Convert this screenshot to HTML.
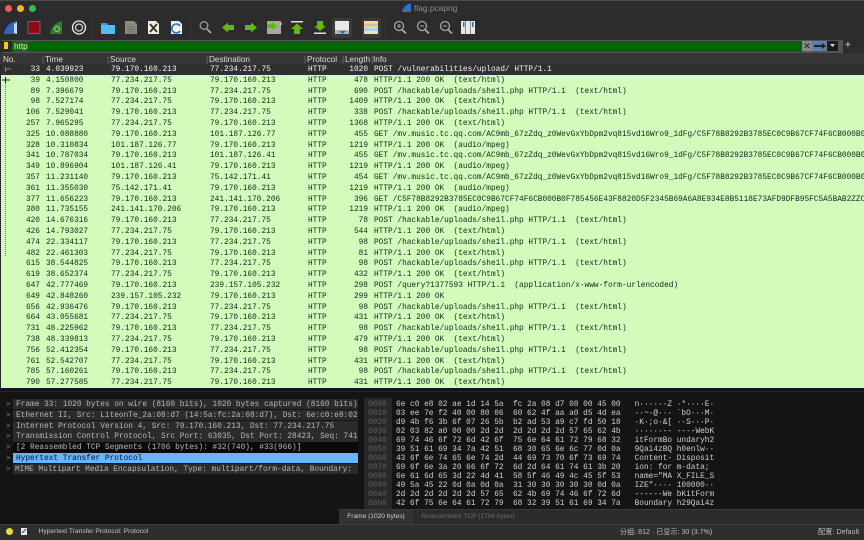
<!DOCTYPE html>
<html><head><meta charset="utf-8"><style>
html,body{margin:0;padding:0;background:#2b2b2b}
#a{position:relative;width:864px;height:540px;overflow:hidden;background:#2c2c2c;font-family:"Liberation Sans","Noto Sans CJK SC",sans-serif;filter:blur(.35px)}
#a div,#a svg{position:absolute}
.m{font-family:"Liberation Mono",monospace;font-size:7.8px;white-space:pre}
.h span{position:absolute;top:0;font-size:8.2px;color:#ddd}
#l{left:1px;top:64px;width:863px;height:324px;background:#d3fcbc;overflow:hidden;white-space:normal}
#l p{position:absolute;left:0;width:863px;height:10.8px;line-height:10.8px;margin:0;color:#12281a;overflow:hidden;white-space:pre}
#l p:first-child{background:#303030;color:#f2f2f2;top:0}
#l i{font-style:normal;position:absolute;top:1px}
#l i:nth-child(1){left:2px;width:37px;text-align:right}
#l i:nth-child(2){left:45px}
#l i:nth-child(3){left:110px}
#l i:nth-child(4){left:209px}
#l i:nth-child(5){left:307px}
#l i:nth-child(6){left:337px;width:30px;text-align:right}
#l i:nth-child(7){left:373px}
.d{left:13px;width:345px;height:10.4px;line-height:12.4px;background:#2b2b2b;color:#b8b8b8;padding-left:3px;box-sizing:border-box;overflow:hidden}
.ar{left:6px;color:#888;font-size:7.5px;line-height:12.4px}
#x{left:396px;top:400.5px;width:468px;line-height:9.04px;color:#cfcfcf}
#o{left:364px;top:398px;width:28px;line-height:9.04px;color:#5f5f5f;background:#282828;padding:2.5px 0 0 4px;box-sizing:border-box;height:111px}
</style></head><body><div id="a">
<div style="left:0;top:0;width:864px;height:1px;background:#4a4a4a"></div>
<div style="left:4.5px;top:5px;width:7px;height:7px;border-radius:50%;background:#f25c54"></div>
<div style="left:16.5px;top:5px;width:7px;height:7px;border-radius:50%;background:#f5b62e"></div>
<div style="left:28.5px;top:5px;width:7px;height:7px;border-radius:50%;background:#2fc14a"></div>
<div style="left:414px;top:3px;font-size:8.4px;line-height:11px;color:#8d8d8d">flag.pcapng</div>
<svg style="left:0;top:0" width="864" height="40" viewBox="0 0 864 40">
<path d="M402 12C403 7 406 4 411 3.500V12Z" fill="#2f6fd0"/>
<path d="M4 34C5 27 10 22 17 21V34Z" fill="#2c64c8"/><path d="M14 33V24L17 22V34Z" fill="#c9d7f0"/>
<rect x="28" y="21.500" width="12" height="12" fill="#8b0d16" stroke="#666"/>
<path d="M50 34C51 27 56 22 62 21V34Z" fill="#2e7d32"/><circle cx="57" cy="29" r="2.500" fill="none" stroke="#a9d18e"/>
<circle cx="79" cy="27.500" r="6.500" fill="none" stroke="#eee" stroke-width="1.300"/><circle cx="79" cy="27.500" r="3.500" fill="none" stroke="#ddd" stroke-width="1.200"/>
<rect x="92" y="18" width="1" height="20" fill="#3a3a3a"/>
<path d="M101 23H107L108 25H115V34H101Z" fill="#52bdf5"/><path d="M101 23H107L108 25H101Z" fill="#2e97d8"/>
<path d="M125 21H134L137 24V34H125Z" fill="#8a8a82"/><path d="M127 27H135M127 29.500H135M127 32H135" stroke="#66665f" stroke-width=".8"/>
<path d="M148 21H156L159 24V34H148Z" fill="#f3ecd8"/><path d="M150 24L157 32M157 24L150 32" stroke="#333" stroke-width="1.800"/>
<path d="M171 21H179L182 24V34H171Z" fill="#f0f0ee"/><path d="M180 26A4.500 4.500 0 1 0 180 31" fill="none" stroke="#2a6fc0" stroke-width="1.600"/>
<rect x="190" y="18" width="1" height="20" fill="#3a3a3a"/>
<circle cx="204" cy="25.500" r="3.800" fill="none" stroke="#999" stroke-width="1.400"/><path d="M207 29L211 33" stroke="#aaa" stroke-width="1.800"/>
<path d="M222 27.500L228 22.500V25H234V30H228V32.500Z" fill="#5fb90e"/>
<path d="M257 27.500L251 22.500V25H245V30H251V32.500Z" fill="#5fb90e"/>
<rect x="267" y="21" width="14" height="13" fill="#a9a9a0"/><path d="M277 26L272 22V24H267V28H272V30Z" fill="#5fb90e"/><circle cx="281" cy="24" r="1" fill="#e8d24a"/>
<rect x="291" y="21" width="12" height="1.500" fill="#ddd"/><path d="M297 23.500L303 29H300V34H294V29H291Z" fill="#5fb90e"/>
<rect x="314" y="32.500" width="12" height="1.500" fill="#ddd"/><path d="M320 31L326 26H323V21H317V26H314Z" fill="#5fb90e"/>
<rect x="332" y="18" width="20" height="20" rx="2" fill="#3a3a3a"/><rect x="335" y="21" width="14" height="13" fill="#e8e8e8"/><rect x="335" y="30" width="14" height="4" fill="#b5b5b5"/><path d="M339 31H346L342.500 34Z" fill="#1d6fc4"/>
<rect x="362" y="18" width="19" height="20" rx="2" fill="#3a3a3a"/><rect x="364" y="21" width="14" height="2.500" fill="#efe09a"/><rect x="364" y="23.500" width="14" height="2.500" fill="#f3a9b5"/><rect x="364" y="26" width="14" height="2.500" fill="#c9e6a6"/><rect x="364" y="28.500" width="14" height="2.500" fill="#b9c8f0"/><rect x="364" y="31" width="14" height="3" fill="#e6e3c0"/>
<rect x="385" y="18" width="1" height="20" fill="#3a3a3a"/>
<g fill="none" stroke="#a5a5a5" stroke-width="1.300"><circle cx="399" cy="26" r="4.500"/><circle cx="422" cy="26" r="4.500"/><circle cx="445" cy="26" r="4.500"/><path d="M402 29.500L406 33.500M425 29.500L429 33.500M448 29.500L452 33.500" stroke-width="1.800"/><path d="M397 26H401M399 24V28M420 26H424M443 26H447" stroke-width="1"/></g>
<rect x="461" y="21" width="14" height="13" fill="#e8e8e8"/><path d="M465.500 21V34M470.500 21V34" stroke="#666" stroke-width=".7"/><rect x="463" y="22" width="1.500" height="5" fill="#2a6fc0"/><rect x="472" y="22" width="1.500" height="5" fill="#2a6fc0"/>
</svg>
<div style="left:2px;top:40px;width:841px;height:13px;background:#555"></div>
<div style="left:2px;top:41px;width:10px;height:11px;background:#2a2a2a"></div>
<div style="left:4px;top:42px;width:4px;height:7px;background:#f2c811"></div>
<div style="left:12px;top:41px;width:790px;height:11px;background:#006400"></div>
<div style="left:12px;top:41px;width:17px;height:11px;background:#0b6d0b"></div>
<div style="left:14px;top:41px;font-size:8.2px;line-height:11px;color:#eee">http</div>
<div style="left:802px;top:41px;width:10px;height:10px;background:#888;color:#222;font-size:9px;line-height:10px;text-align:center">✕</div>
<div style="left:812px;top:41px;width:15px;height:10px;background:#5b7fa8"></div>
<svg style="left:813px;top:42px" width="14" height="8"><path d="M1 3H9V1L13 4L9 7V5H1Z" fill="#152238"/></svg>
<div style="left:827px;top:41px;width:11px;height:10px;background:#1c1c1c"></div>
<svg style="left:829px;top:44px" width="7" height="4"><path d="M1 0H6L3.500 3Z" fill="#ddd"/></svg>
<div style="left:845px;top:40px;font-size:10px;line-height:12px;color:#aaa;font-weight:bold">+</div>
<div class="h" style="left:0;top:54px;width:864px;height:10px;line-height:11px;background:#363636">
<span style="left:3px">No.</span><span style="left:42px;color:#777">|</span><span style="left:45px">Time</span><span style="left:107px;color:#777">|</span><span style="left:110px">Source</span><span style="left:206px;color:#777">|</span><span style="left:209px">Destination</span><span style="left:304px;color:#777">|</span><span style="left:307px">Protocol</span><span style="left:342px;color:#777">|</span><span style="left:345px;width:25px;overflow:hidden">Length</span><span style="left:371px;color:#777">|</span><span style="left:373px">Info</span></div>
<div style="left:0;top:53px;width:864px;height:1px;background:#363636"></div>
<div style="left:0;top:64px;width:1px;height:324px;background:#2a2a2a"></div>
<div id="l" class="m"><p><i>33</i><i>4.039923</i><i>79.170.160.213</i><i>77.234.217.75</i><i>HTTP</i><i>1020</i><i>POST /vulnerabilities/upload/ HTTP/1.1</i></p><p style="top:10.8px"><i>39</i><i>4.150800</i><i>77.234.217.75</i><i>79.170.160.213</i><i>HTTP</i><i>478</i><i>HTTP/1.1 200 OK  (text/html)</i></p><p style="top:21.6px"><i>89</i><i>7.396679</i><i>79.170.160.213</i><i>77.234.217.75</i><i>HTTP</i><i>690</i><i>POST /hackable/uploads/she1l.php HTTP/1.1  (text/html)</i></p><p style="top:32.4px"><i>98</i><i>7.527174</i><i>77.234.217.75</i><i>79.170.160.213</i><i>HTTP</i><i>1409</i><i>HTTP/1.1 200 OK  (text/html)</i></p><p style="top:43.2px"><i>106</i><i>7.529041</i><i>79.170.160.213</i><i>77.234.217.75</i><i>HTTP</i><i>338</i><i>POST /hackable/uploads/she1l.php HTTP/1.1  (text/html)</i></p><p style="top:54px"><i>257</i><i>7.965295</i><i>77.234.217.75</i><i>79.170.160.213</i><i>HTTP</i><i>1368</i><i>HTTP/1.1 200 OK  (text/html)</i></p><p style="top:64.8px"><i>325</i><i>10.088880</i><i>79.170.160.213</i><i>101.187.126.77</i><i>HTTP</i><i>455</i><i>GET /mv.music.tc.qq.com/AC9mb_67zZdq_z0WevGxYbDpm2vq815vd16Wro9_1dFg/C5F78B8292B3785EC0C9B67CF74F6CB000B0…</i></p><p style="top:75.6px"><i>328</i><i>10.310834</i><i>101.187.126.77</i><i>79.170.160.213</i><i>HTTP</i><i>1219</i><i>HTTP/1.1 200 OK  (audio/mpeg)</i></p><p style="top:86.4px"><i>341</i><i>10.787034</i><i>79.170.160.213</i><i>101.187.126.41</i><i>HTTP</i><i>455</i><i>GET /mv.music.tc.qq.com/AC9mb_67zZdq_z0WevGxYbDpm2vq815vd16Wro9_1dFg/C5F78B8292B3785EC0C9B67CF74F6CB000B0…</i></p><p style="top:97.2px"><i>349</i><i>10.896904</i><i>101.187.126.41</i><i>79.170.160.213</i><i>HTTP</i><i>1219</i><i>HTTP/1.1 200 OK  (audio/mpeg)</i></p><p style="top:108px"><i>357</i><i>11.231140</i><i>79.170.160.213</i><i>75.142.171.41</i><i>HTTP</i><i>454</i><i>GET /mv.music.tc.qq.com/AC9mb_67zZdq_z0WevGxYbDpm2vq815vd16Wro9_1dFg/C5F78B8292B3785EC0C9B67CF74F6CB000B0…</i></p><p style="top:118.8px"><i>361</i><i>11.355030</i><i>75.142.171.41</i><i>79.170.160.213</i><i>HTTP</i><i>1219</i><i>HTTP/1.1 200 OK  (audio/mpeg)</i></p><p style="top:129.6px"><i>377</i><i>11.656223</i><i>79.170.160.213</i><i>241.141.170.206</i><i>HTTP</i><i>396</i><i>GET /C5F78B8292B3785EC0C9B67CF74F6CB000B0F785456E43F8820D5F2345B69A6A8E934E8B5118E73AFD9DFB95FC5A5BAB2ZZC…</i></p><p style="top:140.4px"><i>380</i><i>11.735155</i><i>241.141.170.206</i><i>79.170.160.213</i><i>HTTP</i><i>1219</i><i>HTTP/1.1 200 OK  (audio/mpeg)</i></p><p style="top:151.2px"><i>420</i><i>14.676316</i><i>79.170.160.213</i><i>77.234.217.75</i><i>HTTP</i><i>78</i><i>POST /hackable/uploads/she1l.php HTTP/1.1  (text/html)</i></p><p style="top:162px"><i>426</i><i>14.793027</i><i>77.234.217.75</i><i>79.170.160.213</i><i>HTTP</i><i>544</i><i>HTTP/1.1 200 OK  (text/html)</i></p><p style="top:172.8px"><i>474</i><i>22.334117</i><i>79.170.160.213</i><i>77.234.217.75</i><i>HTTP</i><i>98</i><i>POST /hackable/uploads/she1l.php HTTP/1.1  (text/html)</i></p><p style="top:183.6px"><i>482</i><i>22.461303</i><i>77.234.217.75</i><i>79.170.160.213</i><i>HTTP</i><i>81</i><i>HTTP/1.1 200 OK  (text/html)</i></p><p style="top:194.4px"><i>615</i><i>38.544825</i><i>79.170.160.213</i><i>77.234.217.75</i><i>HTTP</i><i>98</i><i>POST /hackable/uploads/she1l.php HTTP/1.1  (text/html)</i></p><p style="top:205.2px"><i>619</i><i>38.652374</i><i>77.234.217.75</i><i>79.170.160.213</i><i>HTTP</i><i>432</i><i>HTTP/1.1 200 OK  (text/html)</i></p><p style="top:216px"><i>647</i><i>42.777469</i><i>79.170.160.213</i><i>239.157.105.232</i><i>HTTP</i><i>298</i><i>POST /query?1377593 HTTP/1.1  (application/x-www-form-urlencoded)</i></p><p style="top:226.8px"><i>649</i><i>42.848260</i><i>239.157.105.232</i><i>79.170.160.213</i><i>HTTP</i><i>299</i><i>HTTP/1.1 200 OK</i></p><p style="top:237.6px"><i>656</i><i>42.936476</i><i>79.170.160.213</i><i>77.234.217.75</i><i>HTTP</i><i>98</i><i>POST /hackable/uploads/she1l.php HTTP/1.1  (text/html)</i></p><p style="top:248.4px"><i>664</i><i>43.055681</i><i>77.234.217.75</i><i>79.170.160.213</i><i>HTTP</i><i>431</i><i>HTTP/1.1 200 OK  (text/html)</i></p><p style="top:259.2px"><i>731</i><i>48.225962</i><i>79.170.160.213</i><i>77.234.217.75</i><i>HTTP</i><i>98</i><i>POST /hackable/uploads/she1l.php HTTP/1.1  (text/html)</i></p><p style="top:270px"><i>738</i><i>48.339813</i><i>77.234.217.75</i><i>79.170.160.213</i><i>HTTP</i><i>479</i><i>HTTP/1.1 200 OK  (text/html)</i></p><p style="top:280.8px"><i>756</i><i>52.412354</i><i>79.170.160.213</i><i>77.234.217.75</i><i>HTTP</i><i>98</i><i>POST /hackable/uploads/she1l.php HTTP/1.1  (text/html)</i></p><p style="top:291.6px"><i>761</i><i>52.542707</i><i>77.234.217.75</i><i>79.170.160.213</i><i>HTTP</i><i>431</i><i>HTTP/1.1 200 OK  (text/html)</i></p><p style="top:302.4px"><i>785</i><i>57.160261</i><i>79.170.160.213</i><i>77.234.217.75</i><i>HTTP</i><i>98</i><i>POST /hackable/uploads/she1l.php HTTP/1.1  (text/html)</i></p><p style="top:313.2px"><i>790</i><i>57.277585</i><i>77.234.217.75</i><i>79.170.160.213</i><i>HTTP</i><i>431</i><i>HTTP/1.1 200 OK  (text/html)</i></p></div>
<svg style="left:0;top:64px" width="12" height="324"><path d="M5.500 5H11M5.500 3V8" stroke="#888"/><path d="M2 16H10M5.500 13V19" stroke="#1a2a1a"/><path d="M5.500 19V192" stroke="#5d7a55" stroke-dasharray="1 1"/></svg>
<div style="left:0;top:388px;width:864px;height:136px;background:#141414"></div>
<div style="left:0;top:391px;width:864px;height:1px;background:#262626"></div>
<div class="m d" style="top:399px">Frame 33: 1020 bytes on wire (8160 bits), 1020 bytes captured (8160 bits)</div>
<div class="m d" style="top:409.800px">Ethernet II, Src: LiteonTe_2a:08:d7 (14:5a:fc:2a:08:d7), Dst: 6e:c0:e8:02</div>
<div class="m d" style="top:420.600px">Internet Protocol Version 4, Src: 79.170.160.213, Dst: 77.234.217.75</div>
<div class="m d" style="top:431.400px">Transmission Control Protocol, Src Port: 63035, Dst Port: 28423, Seq: 741</div>
<div class="m d" style="top:442.200px;background:#0a0a0a">[2 Reassembled TCP Segments (1706 bytes): #32(740), #33(966)]</div>
<div class="m d" style="top:453px;background:#68b5fb;color:#0b1320">Hypertext Transfer Protocol</div>
<div class="m d" style="top:463.800px;padding-left:2px">MIME Multipart Media Encapsulation, Type: multipart/form-data, Boundary:</div>
<div class="m ar" style="top:399px">&gt;</div>
<div class="m ar" style="top:409.800px">&gt;</div>
<div class="m ar" style="top:420.600px">&gt;</div>
<div class="m ar" style="top:431.400px">&gt;</div>
<div class="m ar" style="top:442.200px">&gt;</div>
<div class="m ar" style="top:453px">&gt;</div>
<div class="m ar" style="top:463.800px">&gt;</div>
<div id="o" class="m">0000
0010
0020
0030
0040
0050
0060
0070
0080
0090
00a0
00b0</div>
<div id="x" class="m">6e c0 e8 02 ae 1d 14 5a  fc 2a 08 d7 08 00 45 00   n······Z ·*····E·
03 ee 7e f2 40 00 80 06  60 62 4f aa a0 d5 4d ea   ··~·@··· `bO···M·
d9 4b f6 3b 6f 07 26 5b  b2 ad 53 a9 c7 fd 50 18   ·K·;o·&amp;[ ··S···P·
02 03 82 a0 00 00 2d 2d  2d 2d 2d 2d 57 65 62 4b   ······-- ----WebK
69 74 46 6f 72 6d 42 6f  75 6e 64 61 72 79 68 32   itFormBo undaryh2
39 51 61 69 34 7a 42 51  68 30 65 6e 6c 77 0d 0a   9Qai4zBQ h0enlw··
43 6f 6e 74 65 6e 74 2d  44 69 73 70 6f 73 69 74   Content- Disposit
69 6f 6e 3a 20 66 6f 72  6d 2d 64 61 74 61 3b 20   ion: for m-data; 
6e 61 6d 65 3d 22 4d 41  58 5f 46 49 4c 45 5f 53   name="MA X_FILE_S
49 5a 45 22 0d 0a 0d 0a  31 30 30 30 30 30 0d 0a   IZE"···· 100000··
2d 2d 2d 2d 2d 2d 57 65  62 4b 69 74 46 6f 72 6d   ------We bKitForm
42 6f 75 6e 64 61 72 79  68 32 39 51 61 69 34 7a   Boundary h29Qai4z</div>
<div style="left:339px;top:509px;width:525px;height:15px;background:#2b2b2b;border-top:1px solid #3a3a3a;box-sizing:border-box"></div>
<div style="left:339px;top:510px;width:74px;height:14px;line-height:14px;background:#333;color:#cfcfcf;font-size:6.6px;text-align:center">Frame (1020 bytes)</div>
<div style="left:413px;top:510px;width:110px;height:14px;line-height:14px;color:#6d6d6d;font-size:6.6px;text-align:center">Reassembled TCP (1706 bytes)</div>
<div style="left:0;top:524px;width:864px;height:16px;background:#2e2e2e;border-top:1px solid #3e3e3e;box-sizing:border-box"></div>
<div style="left:6px;top:528px;width:7px;height:7px;border-radius:50%;background:#e6df3e"></div>
<svg style="left:20px;top:527px" width="9" height="9"><path d="M1 1H7V8H1Z" fill="#eee"/><path d="M2 6L6 2" stroke="#2a6fc0" stroke-width="1.300"/></svg>
<div style="left:38.500px;top:527px;font-size:6.700px;line-height:10px;color:#c4c4c4">Hypertext Transfer Protocol: Protocol</div>
<div style="left:620px;top:527px;font-size:7.100px;line-height:10px;color:#bdbdbd;white-space:pre">分组: 812 · 已显示: 30 (3.7%)</div>
<div style="left:818px;top:527px;font-size:7.200px;line-height:10px;color:#bdbdbd;white-space:pre">配置: Default</div>
</div></body></html>
